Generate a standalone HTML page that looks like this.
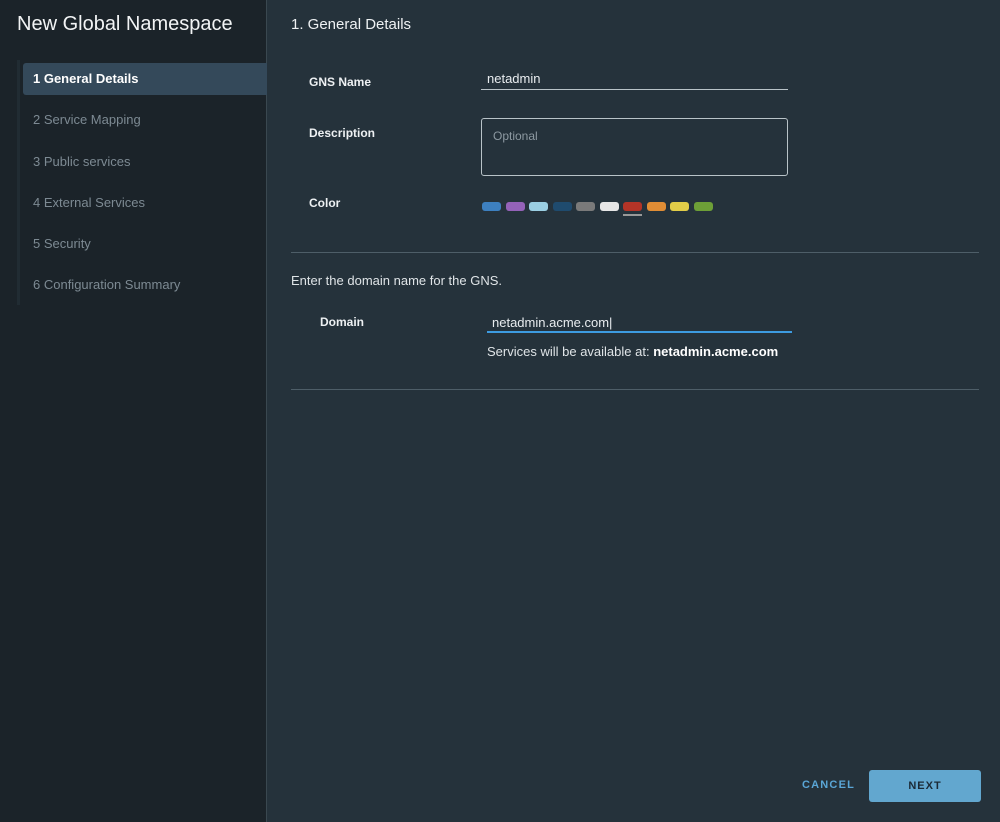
<!DOCTYPE html>
<html><head><meta charset="utf-8"><style>
*{box-sizing:border-box;margin:0;padding:0}
body{width:1000px;height:822px;overflow:hidden;background:#25323b;font-family:"Liberation Sans",sans-serif;position:relative;color:#e8ecef}
.side{position:absolute;left:0;top:0;width:267px;height:822px;background:#1b2329;border-right:1px solid #3a4850}
.a{position:absolute}
.title{left:17px;top:13px;font-size:20px;color:#f2f4f5}
.navline{left:17px;top:60px;width:3px;height:245px;background:#212c33}
.sel{left:23px;top:63px;width:244px;height:32px;background:#34495a;border-radius:3px 0 0 3px}
.nav{left:33px;font-size:13px;color:#7d8a93}
.h{left:291px;top:16px;font-size:15px;color:#eef1f3}
.lbl{font-size:12px;font-weight:bold;color:#eef1f3}
.sw{position:absolute;top:202px;width:19px;height:9px;border-radius:3px}
.hr{left:291px;width:688px;height:1px;background:#4e5e68}
</style></head><body>
<div class="side"></div>
<div class="a title">New Global Namespace</div>
<div class="a navline"></div>
<div class="a sel"></div>
<div class="a nav" style="top:71px;color:#fff;font-weight:bold">1 General Details</div>
<div class="a nav" style="top:112px">2 Service Mapping</div>
<div class="a nav" style="top:154px">3 Public services</div>
<div class="a nav" style="top:195px">4 External Services</div>
<div class="a nav" style="top:236px">5 Security</div>
<div class="a nav" style="top:277px">6 Configuration Summary</div>

<div class="a h">1. General Details</div>
<div class="a lbl" style="left:309px;top:75px">GNS Name</div>
<div class="a" style="left:487px;top:71px;font-size:13px">netadmin</div>
<div class="a" style="left:481px;top:89px;width:307px;height:1px;background:#b9c3c8"></div>
<div class="a lbl" style="left:309px;top:126px">Description</div>
<div class="a" style="left:481px;top:118px;width:307px;height:58px;border:1px solid #b9c3c8;border-radius:3px"></div>
<div class="a" style="left:493px;top:129px;font-size:12px;color:#8d99a1">Optional</div>
<div class="a lbl" style="left:309px;top:196px">Color</div>
<div class="sw" style="left:482px;background:#3d80c0"></div>
<div class="sw" style="left:506px;background:#9462b8"></div>
<div class="sw" style="left:529px;background:#9bcfe3"></div>
<div class="sw" style="left:553px;background:#1f4b6e"></div>
<div class="sw" style="left:576px;background:#7a7a7a"></div>
<div class="sw" style="left:600px;background:#e6e6e6"></div>
<div class="sw" style="left:623px;background:#b33427"></div>
<div class="a" style="left:623px;top:214px;width:19px;height:2px;background:#999"></div>
<div class="sw" style="left:647px;background:#e08d35"></div>
<div class="sw" style="left:670px;background:#e2cd48"></div>
<div class="sw" style="left:694px;background:#6d9f37"></div>
<div class="a hr" style="top:252px"></div>
<div class="a" style="left:291px;top:273px;font-size:13px;color:#dfe4e7">Enter the domain name for the GNS.</div>
<div class="a lbl" style="left:320px;top:315px">Domain</div>
<div class="a" style="left:492px;top:315px;font-size:13px">netadmin.acme.com|</div>
<div class="a" style="left:487px;top:331px;width:305px;height:2px;background:#3d9be0"></div>
<div class="a" style="left:487px;top:344px;font-size:13px;color:#dfe4e7">Services will be available at: <b style="color:#fff">netadmin.acme.com</b></div>
<div class="a hr" style="top:389px"></div>
<div class="a" style="left:802px;top:779px;font-size:11px;font-weight:bold;letter-spacing:1.2px;color:#5aa6d6">CANCEL</div>
<div class="a" style="left:869px;top:770px;width:112px;height:32px;background:#62a7cf;border-radius:3px;font-size:11px;font-weight:bold;letter-spacing:1px;color:#1b2a36;text-align:center;line-height:32px">NEXT</div>
</body></html>
